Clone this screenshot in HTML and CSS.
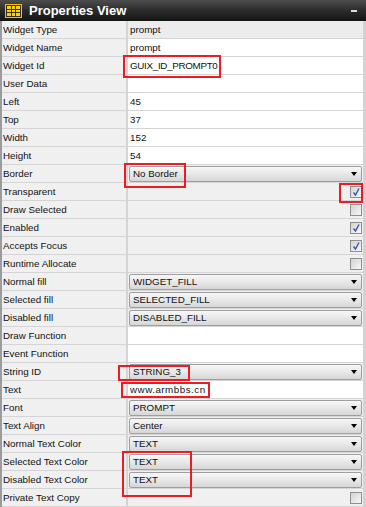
FILE: index.html
```html
<!DOCTYPE html>
<html lang="en">

<head>
    <meta charset="UTF-8">
    <title>Properties View</title>
    <link rel="stylesheet" href="styles.css">
</head>

<body>
    <div class="titlebar">
        <svg class="grid-icon" width="17" height="14" viewBox="0 0 17 14">
            <rect x="0" y="0" width="17" height="14" fill="#f3c300" />
            <rect x="1" y="1" width="15" height="12" fill="#3b2f00" />
            <rect x="2" y="2" width="4" height="3" fill="#f7cf10" />
            <rect x="7" y="2" width="3" height="3" fill="#f7cf10" />
            <rect x="11" y="2" width="4" height="3" fill="#f7cf10" />
            <rect x="2" y="6" width="4" height="2" fill="#f7cf10" />
            <rect x="7" y="6" width="3" height="2" fill="#f7cf10" />
            <rect x="11" y="6" width="4" height="2" fill="#f7cf10" />
            <rect x="2" y="9" width="4" height="3" fill="#f7cf10" />
            <rect x="7" y="9" width="3" height="3" fill="#f7cf10" />
            <rect x="11" y="9" width="4" height="3" fill="#f7cf10" />
        </svg>
        <span class="title">Properties View</span>
        <span class="minus"></span>
    </div>

    <div class="props">
        <div class="row"><div class="label">Widget Type</div><div class="value ro">prompt</div></div>
        <div class="row"><div class="label">Widget Name</div><div class="value">prompt</div></div>
        <div class="row"><div class="label">Widget Id</div><div class="value tight">GUIX_ID_PROMPT0</div></div>
        <div class="row"><div class="label">User Data</div><div class="value"></div></div>
        <div class="row"><div class="label">Left</div><div class="value">45</div></div>
        <div class="row"><div class="label">Top</div><div class="value">37</div></div>
        <div class="row"><div class="label">Width</div><div class="value">152</div></div>
        <div class="row"><div class="label">Height</div><div class="value">54</div></div>
        <div class="row"><div class="label">Border</div><div class="value gray"><div class="combo">No Border</div></div></div>
        <div class="row"><div class="label">Transparent</div><div class="value gray"><span class="check on"></span></div></div>
        <div class="row"><div class="label">Draw Selected</div><div class="value gray"><span class="check"></span></div></div>
        <div class="row"><div class="label">Enabled</div><div class="value gray"><span class="check on"></span></div></div>
        <div class="row"><div class="label">Accepts Focus</div><div class="value gray"><span class="check on"></span></div></div>
        <div class="row"><div class="label">Runtime Allocate</div><div class="value gray"><span class="check"></span></div></div>
        <div class="row"><div class="label">Normal fill</div><div class="value gray"><div class="combo">WIDGET_FILL</div></div></div>
        <div class="row"><div class="label">Selected fill</div><div class="value gray"><div class="combo">SELECTED_FILL</div></div></div>
        <div class="row"><div class="label">Disabled fill</div><div class="value gray"><div class="combo">DISABLED_FILL</div></div></div>
        <div class="row"><div class="label">Draw Function</div><div class="value"></div></div>
        <div class="row"><div class="label">Event Function</div><div class="value"></div></div>
        <div class="row"><div class="label">String ID</div><div class="value gray"><div class="combo">STRING_3</div></div></div>
        <div class="row"><div class="label">Text</div><div class="value wide">www.armbbs.cn</div></div>
        <div class="row"><div class="label">Font</div><div class="value gray"><div class="combo">PROMPT</div></div></div>
        <div class="row"><div class="label">Text Align</div><div class="value gray"><div class="combo">Center</div></div></div>
        <div class="row"><div class="label">Normal Text Color</div><div class="value gray"><div class="combo">TEXT</div></div></div>
        <div class="row"><div class="label">Selected Text Color</div><div class="value gray"><div class="combo">TEXT</div></div></div>
        <div class="row"><div class="label">Disabled Text Color</div><div class="value gray"><div class="combo">TEXT</div></div></div>
        <div class="row"><div class="label">Private Text Copy</div><div class="value gray"><span class="check"></span></div></div>
    </div>

    <!-- red annotation boxes -->
    <div class="mark mark-id"></div>
    <div class="mark mark-border"></div>
    <div class="mark mark-transparent"></div>
    <div class="mark mark-string"></div>
    <div class="mark mark-text"></div>
    <div class="mark mark-colors"></div>
</body>

</html>
```
FILE: styles.css
```css
body {
    margin: 0;
    width: 366px;
    height: 507px;
    overflow: hidden;
    position: relative;
    background: #f0f0f0;
    font-family: "Liberation Sans", Arial, sans-serif;
    font-size: 9.8px;
    color: #111;
}

.titlebar {
    height: 21px;
    display: flex;
    align-items: center;
    padding-left: 5px;
    box-sizing: border-box;
    background: linear-gradient(#4d4d4d, #2b2b2b 50%, #141414);
    color: #fff;
}

.grid-icon {
    display: block;
    margin-right: 7px;
}

.title {
    font-size: 13px;
    font-weight: bold;
}

.minus {
    margin-left: auto;
    margin-right: 9px;
    width: 6px;
    height: 2px;
    background: #dcdcdc;
}

.props {
    border-left: 2px solid #9c9c9c;
    border-right: 3px solid #d3d3d3;
}

.row {
    display: grid;
    grid-template-columns: 124px 1fr;
    height: 18px;
    box-sizing: border-box;
    border-bottom: 1px solid #d5d5d5;
}

.label {
    padding-left: 1px;
    line-height: 17px;
    background: #f0f0f0;
    white-space: nowrap;
}

.value {
    display: flex;
    align-items: center;
    padding-left: 2px;
    border-left: 2px solid #d5d5d5;
    background: #fff;
    white-space: nowrap;
}

.value.ro {
    background: #ececec;
}

.value.gray {
    background: #f0f0f0;
}

.value.wide {
    letter-spacing: 0.5px;
}

.value.tight {
    letter-spacing: -0.3px;
}

.combo {
    flex: 1;
    display: flex;
    align-items: center;
    height: 16px;
    margin: 0 1px 0 -1px;
    padding-left: 3px;
    box-sizing: border-box;
    border: 1px solid #9e9e9e;
    border-radius: 2px;
    background: linear-gradient(#f7f7f7, #e8e8e8 50%, #d6d6d6);
}

.combo::after {
    content: "";
    margin-left: auto;
    margin-right: 4px;
    border-left: 3.5px solid transparent;
    border-right: 3.5px solid transparent;
    border-top: 4px solid #000;
}

.check {
    margin-left: auto;
    margin-right: 1px;
    width: 12px;
    height: 12px;
    box-sizing: border-box;
    border: 1px solid #8f8f8f;
    background: linear-gradient(135deg, #d2d2d2, #f9f9f9);
}

.check.on {
    background: url("data:image/svg+xml;utf8,<svg xmlns='http://www.w3.org/2000/svg' width='10' height='10'><path d='M2.5 5.5 L4.5 8 L8 1.5' fill='none' stroke='%233552b0' stroke-width='1.4'/></svg>") no-repeat center, linear-gradient(135deg, #d2d2d2, #f9f9f9);
}

.mark {
    position: absolute;
    box-sizing: border-box;
    border: 2px solid #ec1c24;
}

.mark-id {
    left: 123px;
    top: 55px;
    width: 98px;
    height: 23px;
}

.mark-border {
    left: 124px;
    top: 163px;
    width: 62px;
    height: 25px;
}

.mark-transparent {
    left: 339px;
    top: 183px;
    width: 24px;
    height: 20px;
}

.mark-string {
    left: 118px;
    top: 365px;
    width: 72px;
    height: 16px;
}

.mark-text {
    left: 121px;
    top: 382px;
    width: 89px;
    height: 16px;
}

.mark-colors {
    left: 122px;
    top: 451px;
    width: 70px;
    height: 46px;
}
```
